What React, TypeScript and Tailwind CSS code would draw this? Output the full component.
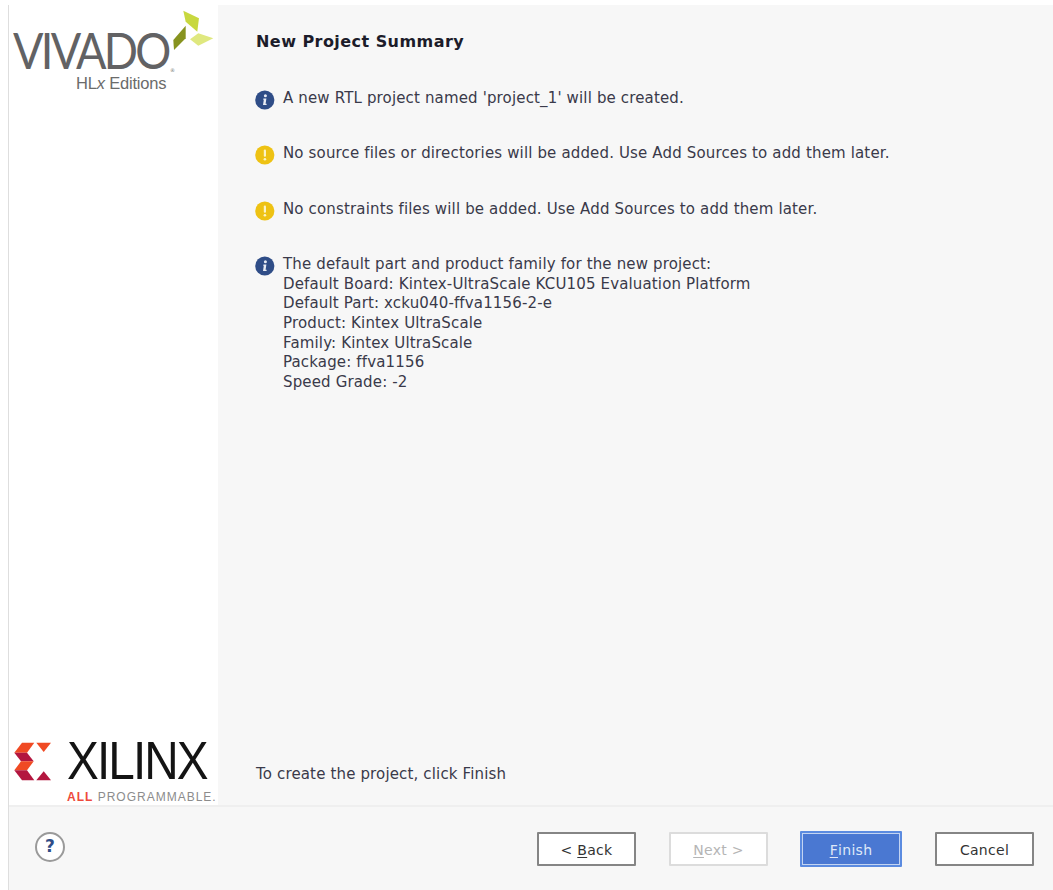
import React from 'react';

const uiFont = "font-['DejaVu_Sans',sans-serif]";

function InfoIcon() {
  return (
    <svg width="20" height="20" viewBox="0 0 20 20" className="shrink-0">
      <circle cx="9.8" cy="10" r="9.6" fill="#2f4d87" />
      <circle cx="10.4" cy="5.8" r="1.5" fill="#e8ecf4" />
      <path d="M8.4 8.6h3l-.8 5.2h1v1.2H8l.8-5.2h-.6z" fill="#e8ecf4" />
    </svg>
  );
}

function WarnIcon() {
  return (
    <svg width="20" height="20" viewBox="0 0 20 20" className="shrink-0">
      <circle cx="9.8" cy="10" r="9.6" fill="#eec213" />
      <rect x="8.8" y="4.4" width="2.2" height="7.4" rx="1" fill="#fbf3c8" />
      <circle cx="9.9" cy="14.2" r="1.3" fill="#fbf3c8" />
    </svg>
  );
}

function Message({ kind, lines }: { kind: 'info' | 'warn'; lines: string[] }) {
  return (
    <div className="flex items-start gap-[8px]">
      <div className="mt-[1px]">{kind === 'info' ? <InfoIcon /> : <WarnIcon />}</div>
      <div className="text-[15px] leading-[19.7px] tracking-[0.15px] text-[#3a3a4a] whitespace-nowrap">
        {lines.map((l) => (
          <div key={l}>{l}</div>
        ))}
      </div>
    </div>
  );
}

function VivadoLogo() {
  return (
    <div className="relative h-[90px] pl-[4px] pt-[25px]">
      <div className="origin-left scale-x-90 font-['Lato',sans-serif] font-normal text-[50px] leading-[40px] tracking-[-3px] text-[#626264]">
        VIVADO
      </div>
      <span className="absolute left-[161px] top-[62px] text-[5px] leading-[6px] text-[#777]">®</span>
      <div className="mt-[5px] ml-[63px] font-['Liberation_Sans',sans-serif] text-[16.5px] leading-[17px] tracking-[-0.2px] text-[#6b6b6b]">
        HL<span className="italic">x</span> Editions
      </div>
      <svg width="55" height="50" viewBox="0 0 55 50" className="absolute left-[156px] top-0">
        <polygon points="18.3,5.7 34,13.3 32.3,26.7 20.7,16.7" fill="#c8d83f" />
        <polygon points="25,34.3 33.3,28.3 48.3,33.3 33.3,40.7" fill="#dfe87f" />
        <polygon points="8.3,35 20.7,20.7 20.7,33.3 9,45" fill="#87931f" />
      </svg>
    </div>
  );
}

function XilinxLogo() {
  return (
    <div className="pl-[5px] pb-[2px]">
      <div className="flex items-center gap-[15px]">
        <svg width="38" height="39" viewBox="7 5 38 39" className="shrink-0">
          <polygon points="7.3,15.7 15,5.7 27.3,5.7 20,15.7" fill="#f04a23" />
          <polygon points="7.3,15.7 20,15.7 26.7,24.3 14,24.3" fill="#b3163f" />
          <polygon points="7.3,33.3 14,24.3 26.7,24.3 20,33.3" fill="#f04a23" />
          <polygon points="7.3,33.3 20,33.3 27.3,43.3 15,43.3" fill="#b3163f" />
          <polygon points="29.3,5.7 44,5.7 36.7,15" fill="#f04a23" />
          <polygon points="29.3,43.3 44,43.3 36.7,34.3" fill="#b3163f" />
        </svg>
        <span className="inline-block origin-left scale-x-90 font-['Liberation_Sans',sans-serif] text-[53px] leading-[46px] tracking-[-2.1px] text-[#141414]">
          XILINX
        </span>
      </div>
      <div className="mt-[7px] ml-[53px] font-['Liberation_Sans',sans-serif] text-[12px] leading-[12px] tracking-[1px] whitespace-nowrap text-[#8c8c8c]">
        <span className="font-bold text-[#ee4a3c]">ALL</span> PROGRAMMABLE.
      </div>
    </div>
  );
}

function WizardButton({
  mnemonic,
  rest,
  prefix,
  variant = 'normal',
}: {
  mnemonic: string;
  rest: string;
  prefix?: string;
  variant?: 'normal' | 'disabled' | 'primary';
}) {
  const styles = {
    normal: 'w-[99px] h-[34px] bg-white border-[#858585] text-[#333]',
    disabled: 'w-[99px] h-[34px] bg-white border-[#dcdcdc] text-[#b5b5b5]',
    primary:
      'w-[102px] h-[36px] bg-[#4a78d2] border-[#5b8be0] text-[#dfe8f8] outline outline-1 -outline-offset-3 outline-[#c3d4f2]',
  }[variant];
  return (
    <button
      className={`border-2 rounded-[1px] text-[14px] leading-none tracking-[0.3px] whitespace-pre flex items-center justify-center pt-[2px] ${styles}`}
    >
      {prefix}
      <span className="underline underline-offset-2">{mnemonic}</span>
      {rest}
    </button>
  );
}

export default function App() {
  return (
    <div className={`w-[1053px] h-[890px] bg-white flex overflow-hidden ${uiFont}`}>
      <div className="w-[8px] shrink-0" />
      <div className="flex-1 flex flex-col border-l border-[#dedede] mt-[5px]">
        <div className="flex-1 flex min-h-0">
          <aside className="w-[209px] shrink-0 bg-white flex flex-col justify-between">
            <VivadoLogo />
            <XilinxLogo />
          </aside>
          <main className="flex-1 bg-[#f7f7f7] pl-[37px] pr-4 pt-[27px] pb-[21px] flex flex-col">
            <h1 className="ml-[1px] text-[16px] leading-[20px] tracking-[0.45px] font-bold text-[#1c1c2a]">
              New Project Summary
            </h1>
            <div className="mt-[37px] flex flex-col gap-[34.3px]">
              <Message kind="info" lines={["A new RTL project named 'project_1' will be created."]} />
              <Message kind="warn" lines={['No source files or directories will be added. Use Add Sources to add them later.']} />
              <Message kind="warn" lines={['No constraints files will be added. Use Add Sources to add them later.']} />
              <Message
                kind="info"
                lines={[
                  'The default part and product family for the new project:',
                  'Default Board: Kintex-UltraScale KCU105 Evaluation Platform',
                  'Default Part: xcku040-ffva1156-2-e',
                  'Product: Kintex UltraScale',
                  'Family: Kintex UltraScale',
                  'Package: ffva1156',
                  'Speed Grade: -2',
                ]}
              />
            </div>
            <p className="ml-[1px] mt-auto text-[15px] leading-[20px] tracking-[0.15px] text-[#3a3a4a]">
              To create the project, click Finish
            </p>
          </main>
        </div>
        <footer className="h-[85px] shrink-0 bg-[#f7f7f7] border-t-2 border-[#efefef] flex items-center pl-[26px] pr-[19px]">
          <div className="w-[30px] h-[30px] mb-[4px] rounded-full border-2 border-[#9a9a9a] bg-white flex items-center justify-center text-[17px] font-bold text-[#2f4d87]">
            ?
          </div>
          <div className="ml-auto flex items-center">
            <WizardButton prefix="< " mnemonic="B" rest="ack" />
            <div className="w-[33px]" />
            <WizardButton mnemonic="N" rest="ext >" variant="disabled" />
            <div className="w-[32px]" />
            <WizardButton mnemonic="F" rest="inish" variant="primary" />
            <div className="w-[33px]" />
            <WizardButton mnemonic="" rest="Cancel" />
          </div>
        </footer>
      </div>
    </div>
  );
}
